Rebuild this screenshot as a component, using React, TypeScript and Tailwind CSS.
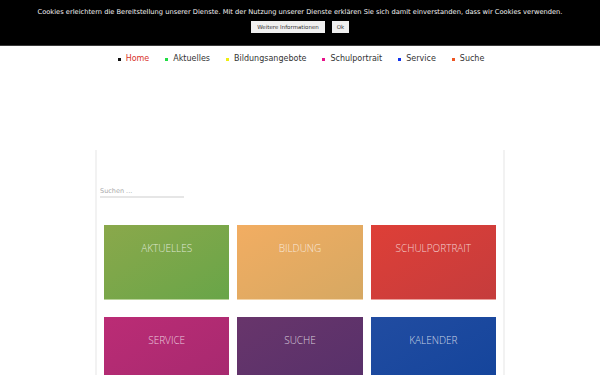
import React from "react";

const nav = [
  { label: "Home", color: "bg-[#111]", text: "text-[#d9332b]" },
  { label: "Aktuelles", color: "bg-[#22dd44]", text: "text-[#333]" },
  { label: "Bildungsangebote", color: "bg-[#eeee11]", text: "text-[#333]" },
  { label: "Schulportrait", color: "bg-[#e8108a]", text: "text-[#333]" },
  { label: "Service", color: "bg-[#1133ee]", text: "text-[#333]" },
  { label: "Suche", color: "bg-[#ee5522]", text: "text-[#333]" },
];

const tiles = [
  { label: "AKTUELLES", cls: "bg-gradient-to-br from-[#8aa84b] to-[#68a548] border-b-[#b9d39a]" },
  { label: "BILDUNG", cls: "bg-gradient-to-br from-[#f2ad62] to-[#d6a862] border-b-[#f3d4a8]" },
  { label: "SCHULPORTRAIT", cls: "bg-gradient-to-br from-[#de3f37] to-[#c53c3c] border-b-[#eaa09c]" },
  { label: "SERVICE", cls: "bg-gradient-to-br from-[#bb2c75] to-[#a5296f] border-b-[#e2a0c3]" },
  { label: "SUCHE", cls: "bg-gradient-to-br from-[#68356b] to-[#56306a] border-b-[#c0a8c6]" },
  { label: "KALENDER", cls: "bg-gradient-to-br from-[#214ca1] to-[#13449b] border-b-[#9ab0da]" },
];

export default function App() {
  return (
    <div className="h-[375px] w-[600px] overflow-hidden bg-white" style={{ fontFamily: '"DejaVu Sans", sans-serif' }}>
      <div className="h-[46px] bg-black border-b border-b-[#3a3a3a] flex flex-col items-center pt-[7px]">
        <p className="text-[6.7px] leading-[10px] text-[#f2f2f2] whitespace-nowrap">
          Cookies erleichtern die Bereitstellung unserer Dienste. Mit der Nutzung unserer Dienste erklären Sie sich damit einverstanden, dass wir Cookies verwenden.
        </p>
        <div className="flex gap-[7px] mt-[4px]">
          <span className="h-[12px] w-[74px] bg-[#f0f0f0] text-[#333] text-[5.5px] leading-[12px] text-center">Weitere Informationen</span>
          <span className="h-[12px] w-[17px] bg-[#f0f0f0] text-[#333] text-[5.5px] leading-[12px] text-center">Ok</span>
        </div>
      </div>
      <nav className="flex justify-center gap-[16px] mt-[8px] pl-[2px]">
        {nav.map((n) => (
          <div key={n.label} className="flex items-center gap-[5px]">
            <span className={`w-[3px] h-[3px] ${n.color}`} />
            <span className={`text-[8px] leading-[10px] ${n.text}`}>{n.label}</span>
          </div>
        ))}
      </nav>
      <div className="mx-auto mt-[86px] w-[410px] h-[300px] border-l-2 border-r-2 border-[#f2f2f2] px-[2px]">
        <div className="pt-[37px] pl-[1px]">
          <div className="w-[84px] border-b-2 border-[#e6e6e6] text-[6.5px] leading-[9px] text-[#aaa]">Suchen ...</div>
        </div>
        <div className="grid grid-cols-3 gap-x-[8px] gap-y-[17px] px-[5px] mt-[27px]">
          {tiles.map((t) => (
            <div key={t.label} className={`h-[75px] ${t.cls} border-b flex justify-center pt-[16px]`}>
              <span className="text-[10px] leading-[14px] text-white/75 font-light" style={{ fontFamily: '"Open Sans", sans-serif' }}>
                {t.label}
              </span>
            </div>
          ))}
        </div>
      </div>
    </div>
  );
}
